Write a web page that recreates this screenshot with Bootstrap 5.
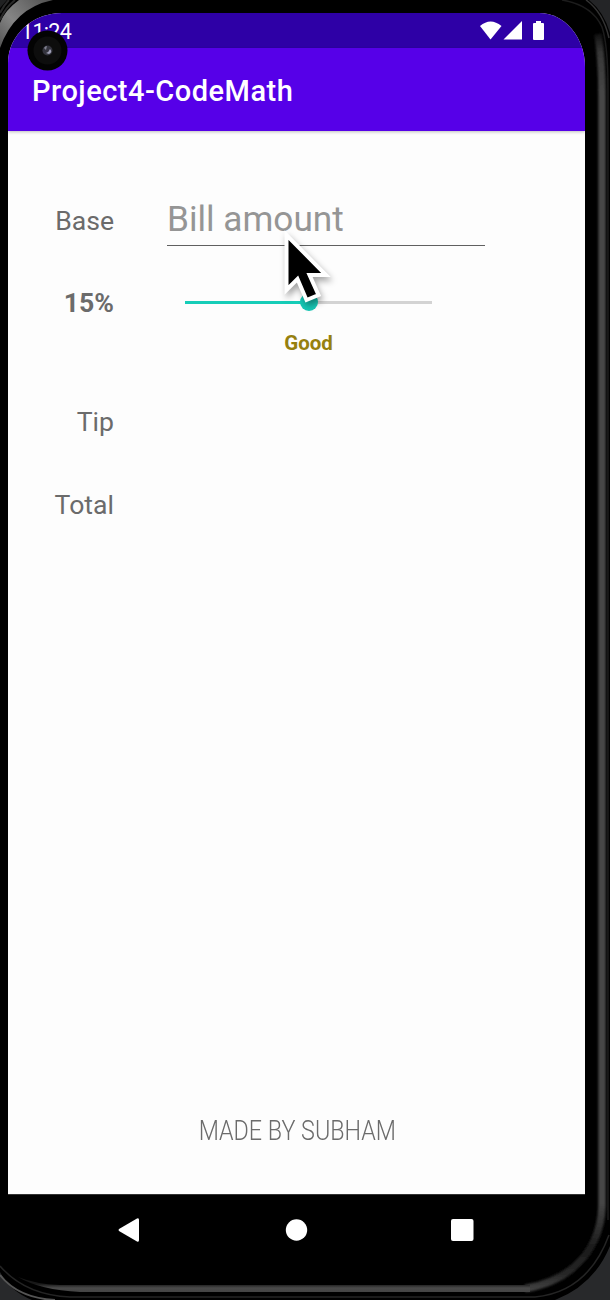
<!DOCTYPE html>
<html lang="en">
<head>
<meta charset="utf-8">
<meta name="viewport" content="width=device-width, initial-scale=1">
<title>Project4-CodeMath</title>
<link href="https://cdn.jsdelivr.net/npm/bootstrap@5.3.0/dist/css/bootstrap.min.css" rel="stylesheet">
<style>
body { font-family: Roboto, "Liberation Sans", sans-serif; background: #000; color: #6b6b6b; }
.device { width: 610px; height: 1300px; padding: 13px 25px 0 8px; }
.bezel { z-index: 0; }
.screen { z-index: 1; height: 1181px; background: #fdfdfd; border-radius: 54px 46px 0 0 / 50px 54px 0 0; flex: none; }
.statusbar { height: 35px; background: #2e00a6; color: #fff; padding: 0 39px 0 13px; }
.clock { font-size: 21.5px; line-height: 37px; letter-spacing: -.7px; }
.appbar { height: 83px; background: #5600e8; box-shadow: 0 1px 3px rgba(0,0,0,.25); padding: 0 24px; }
.appbar h1 { font-size: 29px; font-weight: 500; color: #fff; line-height: 34px; padding-top: 3px; letter-spacing: .5px; }
.form-area { padding: 0 100px 0 0; }
.tag { width: 106px; margin-right: 53px; font-size: 26.6px; line-height: 32px; text-align: right; flex: none; }
.form-row { height: 50px; }
.r-base { margin-top: 65px; }
.r-percent { margin-top: 32px; }
.r-tip { margin-top: 42px; }
.r-total { margin-top: 33px; }
.amount, .amount:focus { font-size: 35.2px; line-height: 42px; height: 50px; padding: 0 0 3px; background: transparent; border: 0; border-bottom: 1px solid #606060; border-radius: 0; box-shadow: none; width: 318px; }
.amount::placeholder { color: #959595; opacity: 1; }
.track { width: 247px; height: 3px; margin: 0 0 2px 18px; background: #d3d3d3; border-radius: 0; overflow: visible; }
.track .fill { width: 50%; background: #16cdb8; }
.thumb { width: 18px; height: 18px; background: #16c7b5; left: 50%; top: 50%; }
.rating { margin: 3px 0 0 177px; width: 247px; font-size: 20.5px; line-height: 24px; color: #96800f; }
.credit { font-size: 27px; line-height: 32px; font-weight: 300; margin-bottom: 47px; padding-left: 1px; }
.credit span { transform: scaleX(.863); }
.navkeys { z-index: 1; height: 73px; border-top: 1px solid #333; }
.camera { left: 27px; top: 30px; z-index: 3; }
.pointer { left: 278px; top: 224px; z-index: 4; filter: drop-shadow(2px 4px 3px rgba(0,0,0,.35)); }
</style>
<script src="https://cdn.jsdelivr.net/npm/bootstrap@5.3.0/dist/js/bootstrap.bundle.min.js"></script>
</head>
<body class="overflow-hidden">
<div class="device position-relative d-flex flex-column overflow-hidden">
  <svg class="bezel position-absolute top-0 start-0" width="610" height="1300" viewBox="0 0 610 1300" aria-hidden="true">
    <defs>
      <linearGradient id="base" x1="0" x2="0" y1="1284" y2="1294" gradientUnits="userSpaceOnUse"><stop offset="0" stop-color="#181818"/><stop offset=".4" stop-color="#4a4a4a"/><stop offset=".8" stop-color="#444"/><stop offset="1" stop-color="#111"/></linearGradient>
      <linearGradient id="side" x1="0" x2="0" y1="28" y2="1292" gradientUnits="userSpaceOnUse"><stop offset="0" stop-color="#444" stop-opacity="0"/><stop offset=".02" stop-color="#383838"/><stop offset=".05" stop-color="#464646"/><stop offset=".93" stop-color="#464646"/><stop offset=".965" stop-color="#1c1c1c"/><stop offset=".985" stop-color="#262626"/><stop offset="1" stop-color="#464646"/></linearGradient>
      <linearGradient id="corner" x1="0" y1="48" x2="52" y2="0" gradientUnits="userSpaceOnUse"><stop offset="0" stop-color="#555"/><stop offset=".4" stop-color="#858585"/><stop offset="1" stop-color="#505050"/></linearGradient>
      <filter id="soft" x="-30%" width="160%" y="-5%" height="110%"><feGaussianBlur stdDeviation=".8"/></filter>
    </defs>
    <path d="M589 0Q604 12 610 33V0Z" fill="#242527"/>
    <path d="M610 1246Q594 1285 555 1300H610Z" fill="#28292b"/>
    <path d="M0 1272Q10 1291 32 1300H0Z" fill="#28292b"/>
    <path d="M562 0Q592 5 602 27Q608 45 608 90V1220" fill="none" stroke="#1c1c1c" stroke-width="1.5"/>
    <path d="M586 0Q603 12 609 38" fill="none" stroke="#333" stroke-width="1.500"/>
    <path d="M598 34Q602 60 602 95V1206Q601 1244 573 1268Q553 1284 525 1288.500" fill="none" stroke="url(#side)" stroke-width="7.500" filter="url(#soft)"/>
    <path d="M60 1285H530V1292H80Q40 1290 18 1277Q35 1284 60 1285Z" fill="url(#base)"/>
    <path d="M0 1275Q18 1298 55 1300" fill="none" stroke="#555" stroke-width="2"/>
    <path d="M0 1266Q25 1295 70 1297H535Q588 1292 609 1235" fill="none" stroke="#242424" stroke-width="1.500"/>
    <path d="M0 23Q5 10 19 0H53Q14 8 0 48Z" fill="url(#corner)"/>
    <path d="M0 20Q5 8 15 0M0 13Q4 5 9 0" fill="none" stroke="#292929" stroke-width="2"/>
    <path d="M0 0H7L0 8Z" fill="#202122"/>
  </svg>

  <main class="screen position-relative d-flex flex-column overflow-hidden">
    <div class="statusbar d-flex justify-content-between">
      <span class="clock">11:24</span>
      <svg width="67" height="35" viewBox="0 0 67 35" fill="#fff" aria-hidden="true">
        <path d="M1 13Q11.500 4 22.500 13L11.500 26.500Z"/>
        <path d="M43 8V26.500H24.500Z"/>
        <path d="M57 8H62V10H64Q65 10 65 11V26Q65 27 64 27H55Q54 27 54 26V11Q54 10 55 10H57Z"/>
      </svg>
    </div>
    <header class="appbar d-flex align-items-center"><h1 class="m-0">Project4-CodeMath</h1></header>
    <form class="form-area">
      <div class="form-row r-base d-flex align-items-center">
        <label class="tag" for="amount">Base</label>
        <input id="amount" class="amount form-control" type="text" placeholder="Bill amount">
      </div>
      <div class="form-row r-percent d-flex align-items-center">
        <span class="tag fw-bold">15%</span>
        <div class="track progress position-relative">
          <div class="fill progress-bar"></div>
          <span class="thumb position-absolute translate-middle rounded-circle"></span>
        </div>
      </div>
      <div class="rating text-center fw-bold">Good</div>
      <div class="form-row r-tip d-flex align-items-center"><span class="tag">Tip</span></div>
      <div class="form-row r-total d-flex align-items-center"><span class="tag">Total</span></div>
    </form>
    <footer class="credit text-center mt-auto"><span class="d-inline-block text-nowrap">MADE BY SUBHAM</span></footer>
  </main>

  <nav class="navkeys position-relative d-flex" aria-label="System navigation">
    <svg width="577" height="72" viewBox="0 0 577 72" fill="#fff" aria-hidden="true">
      <path d="M111 34L129 23.500Q131 22.500 131 25V45Q131 47.500 129 46.500L111 36Q110 35 111 34Z"/>
      <circle cx="288.500" cy="35" r="10.700"/>
      <rect x="443" y="24" width="22.500" height="22" rx="2"/>
    </svg>
  </nav>

  <svg class="camera position-absolute" width="41" height="41" viewBox="0 0 41 41" aria-hidden="true">
    <circle cx="20.500" cy="20.500" r="20" fill="#030303"/><circle cx="20.500" cy="20.500" r="14" fill="#0d0d0d"/>
    <circle cx="20.500" cy="20.500" r="5" fill="#34343e"/><path d="M17 18Q18 16 20 16L19 20Z" fill="#828291"/><path d="M23 19Q26 22 22 24L19 23Q22 22 23 19Z" fill="#a0a0b8"/>
  </svg>
  <svg class="pointer position-absolute" width="56" height="82" viewBox="0 0 56 82" aria-hidden="true">
    <path d="M8.500 11V66L19.500 55L28.500 76L40.500 71L31.500 51H48Z" fill="#000" stroke="#fff" stroke-width="4"/>
  </svg>
</div>
</body>
</html>
